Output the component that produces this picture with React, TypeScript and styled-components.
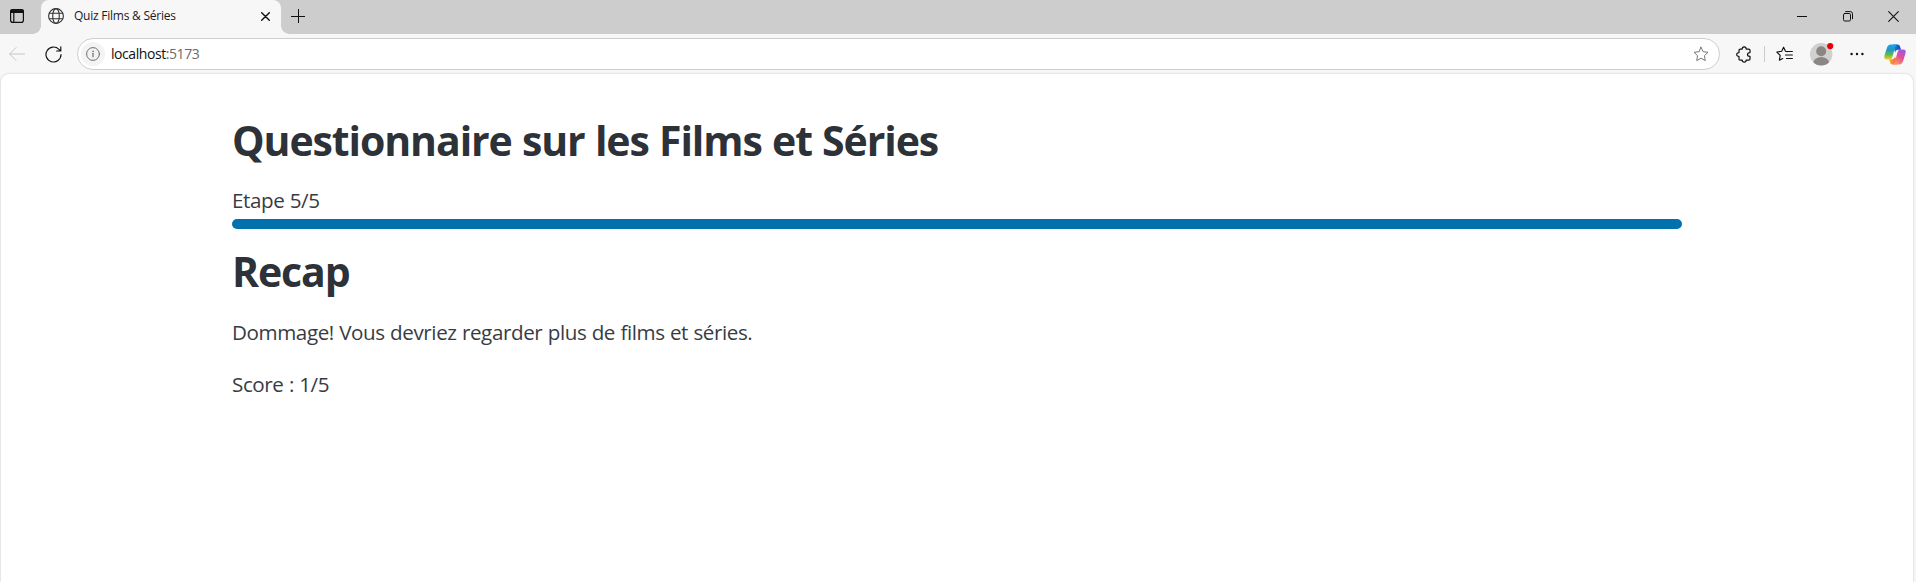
import React from "react";
import styled, { createGlobalStyle } from "styled-components";

const GlobalStyle = createGlobalStyle`
  * { box-sizing: border-box; }
  html, body { margin: 0; height: 100%; overflow: hidden; }
  body { background: #f7f7f7; font-family: "Segoe UI", "Open Sans", "Noto Sans", sans-serif; }
`;

const Window = styled.div`
  display: flex;
  flex-direction: column;
  width: 100%;
  height: 582px;
  background: #f7f7f7;
`;

const TabStrip = styled.div`
  display: flex;
  height: 34px;
  background: #cdcdcd;
`;

const StripIcon = styled.div<{ $width: number }>`
  display: flex;
  align-items: center;
  justify-content: center;
  width: ${(p) => p.$width}px;
  height: 32px;
`;

const Tab = styled.div`
  position: relative;
  display: flex;
  align-items: center;
  width: 240px;
  height: 34px;
  padding: 0 11px 2px 7px;
  background: #f7f7f7;
  border-radius: 8px 8px 0 0;
  &::before, &::after {
    content: "";
    position: absolute;
    bottom: 0;
    width: 8px;
    height: 8px;
  }
  &::before {
    left: -8px;
    background: radial-gradient(circle at 0 0, transparent 7.5px, #f7f7f7 8px);
  }
  &::after {
    right: -8px;
    background: radial-gradient(circle at 100% 0, transparent 7.5px, #f7f7f7 8px);
  }
`;

const TabTitle = styled.span`
  flex: 1;
  margin-left: 10px;
  font-size: 12px;
  line-height: 16px;
  letter-spacing: -0.24px;
  color: #1b1b1b;
  white-space: nowrap;
`;

const WindowButtons = styled.div`
  display: flex;
  margin-left: auto;
`;

const Toolbar = styled.div`
  display: flex;
  align-items: center;
  height: 40px;
`;

const ToolIcon = styled.div<{ $width: number }>`
  display: flex;
  flex: none;
  align-items: center;
  justify-content: center;
  width: ${(p) => p.$width}px;
  height: 40px;
`;

const AddressBar = styled.div`
  display: flex;
  align-items: center;
  width: 1643px;
  height: 32px;
  margin-left: 5px;
  padding: 0 10px 0 3px;
  background: #fff;
  border: 1px solid #cecece;
  border-radius: 16px;
`;

const InfoBadge = styled.div`
  display: flex;
  align-items: center;
  justify-content: center;
  width: 24px;
  height: 24px;
  border-radius: 50%;
  background: #f3f3f3;
`;

const Url = styled.div`
  flex: 1;
  margin-left: 6px;
  font-size: 14px;
  line-height: 20px;
  letter-spacing: -0.43px;
  color: #111;
  span { color: #6b6b6b; }
`;

const Divider = styled.div`
  width: 1px;
  height: 16px;
  background: #cbcbcb;
`;

const Page = styled.div`
  flex: 1;
  margin: 0 3px 0 1px;
  background: #fff;
  border-radius: 8px 8px 0 0;
  box-shadow: 0 0 2px rgba(0, 0, 0, 0.24);
`;

const Container = styled.main`
  width: 1450px;
  margin-left: 231px;
  padding-top: 43px;
  color: #373c44;
`;

const Heading = styled.h1<{ $gap: number }>`
  margin: 0 0 ${(p) => p.$gap}px;
  font-size: 41px;
  line-height: 47px;
  font-weight: 700;
  letter-spacing: -1.09px;
  word-spacing: 0.7px;
  color: #2d3138;
  white-space: nowrap;
`;

const Text = styled.p<{ $gap: number }>`
  margin: 0 0 ${(p) => p.$gap}px;
  font-size: 20.6px;
  line-height: 32px;
  letter-spacing: -0.4px;
  word-spacing: 0.4px;
  white-space: nowrap;
`;

const Progress = styled.div`
  height: 10px;
  margin-bottom: 19px;
  border-radius: 5px;
  background: #0172ad;
`;

const line = { fill: "none", stroke: "#111", strokeLinecap: "round", strokeLinejoin: "round" } as const;
const starPath = "M8 1.2l2.1 4.5 4.9.6-3.6 3.4.9 4.9L8 12.2l-4.3 2.4.9-4.9L1 6.3l4.9-.6z";

const TabsIcon = () => (
  <svg width="14" height="14" viewBox="0 0 14 14" {...line} strokeWidth="1.2">
    <rect x=".6" y=".6" width="12.8" height="12.8" rx="2.2" />
    <path d="M1 1.2h12v2.2H1z" fill="#111" />
    <path d="M3.8 4v9" />
  </svg>
);
const Globe = () => (
  <svg width="16" height="16" viewBox="0 0 16 16" {...line} stroke="#333" strokeWidth="1.1">
    <circle cx="8" cy="8" r="7.4" />
    <ellipse cx="8" cy="8" rx="3.3" ry="7.4" />
    <path d="M1.3 5.3h13.4M1.3 10.7h13.4" />
  </svg>
);
const Cross = ({ size, weight }: { size: number; weight: number }) => (
  <svg width={size} height={size} viewBox={`0 0 ${size} ${size}`} {...line} strokeWidth={weight}>
    <path d={`M.7 .7L${size - 0.7} ${size - 0.7}M${size - 0.7} .7L.7 ${size - 0.7}`} />
  </svg>
);
const Plus = () => (
  <svg width="14" height="14" viewBox="0 0 14 14" {...line} strokeLinecap="butt">
    <path d="M7.5 0v14M0 7.5h14" />
  </svg>
);
const Minimize = () => (
  <svg width="10" height="10" viewBox="0 0 10 10" {...line} strokeLinecap="butt"><path d="M0 5.5h10" /></svg>
);
const Restore = () => (
  <svg width="10" height="11" viewBox="0 0 10 11" {...line}>
    <rect x=".5" y="2.5" width="7" height="7.5" rx="1.3" />
    <path d="M2.6 .6h4.7a2.2 2.2 0 0 1 2.2 2.2v5" />
  </svg>
);
const Back = () => (
  <svg width="16" height="14" viewBox="0 0 16 14" {...line} stroke="#c6c6c6"><path d="M15.5 7H.7M7 .6L.6 7 7 13.4" /></svg>
);
const Reload = () => (
  <svg width="17" height="17" viewBox="0 0 17 17" {...line} strokeWidth="1.15">
    <path d="M16 8.5A7.5 7.5 0 1 1 13.9 3.3L15.6 5M15.8 .8V5H11.6" />
  </svg>
);
const Info = () => (
  <svg width="14" height="14" viewBox="0 0 14 14" {...line} stroke="#6e6e6e">
    <circle cx="7" cy="7" r="6.4" /><path d="M7 6.3v3.4" strokeWidth="1.2" /><circle cx="7" cy="4.3" r=".3" />
  </svg>
);
const Star = () => (
  <svg width="16" height="16" viewBox="0 0 16 16" {...line} stroke="#777"><path d={starPath} /></svg>
);
const Puzzle = () => (
  <svg width="15" height="17" viewBox="0 0 15 17" {...line} strokeWidth="1.2">
    <path d="M4.2 3.1h2C6.2 1.6 7 .8 8.2.8s2 .8 2 2.3h2.6q1.2 0 1.2 1.2v2.3c-1.7 0-2.5.7-2.5 1.9s.8 1.9 2.5 1.9v2.5q0 1.2-1.2 1.2h-2.6c0 1.4-.8 2.1-2 2.1s-2-.7-2-2.1h-2Q3 14.1 3 12.9v-2.5C1.5 10.4.7 9.7.7 8.5S1.5 6.6 3 6.6V4.3q0-1.2 1.2-1.2z" />
  </svg>
);
const Favorites = () => (
  <svg width="17" height="16" viewBox="0 0 17 16" {...line} strokeWidth="1.15">
    <path d="M11.5 5.7L9.5 5.3 7.6 1.2 5.7 5.3.8 6l3.4 3.4-.8 4.8 3.3-1.7M10.5 5.5h5.9M9.5 9h6.9M10.5 12.5h5.9" />
  </svg>
);
const Avatar = () => (
  <svg width="24" height="24" viewBox="0 0 24 24">
    <defs><clipPath id="face"><circle cx="11.2" cy="12.3" r="11.2" /></clipPath></defs>
    <circle cx="11.2" cy="12.3" r="11.2" fill="#d2d0ce" />
    <g clipPath="url(#face)" fill="#8a8683"><circle cx="11.2" cy="9.3" r="5" /><ellipse cx="11.2" cy="20.7" rx="7.8" ry="5.6" /></g>
    <circle cx="20.2" cy="4.1" r="3.1" fill="#e3000b" />
  </svg>
);
const More = () => (
  <svg width="14" height="4" viewBox="0 0 14 4" fill="#111"><circle cx="1.6" cy="2" r="1.2" /><circle cx="7" cy="2" r="1.2" /><circle cx="12.4" cy="2" r="1.2" /></svg>
);
const Copilot = () => (
  <svg width="22" height="21" viewBox="0 0 22 21">
    <defs>
      <linearGradient id="cool" x1="0" y1="0" x2="0" y2="1">
        <stop offset="0" stopColor="#18a5e8" /><stop offset=".38" stopColor="#2896bd" /><stop offset=".68" stopColor="#5dbb55" /><stop offset="1" stopColor="#f6cb17" />
      </linearGradient>
      <linearGradient id="warm" x1=".8" y1="0" x2=".25" y2="1">
        <stop offset="0" stopColor="#9a55ee" /><stop offset=".48" stopColor="#e44e97" /><stop offset="1" stopColor="#ff9b55" />
      </linearGradient>
      <linearGradient id="blue"><stop offset="0" stopColor="#168ee0" /><stop offset="1" stopColor="#183fc3" /></linearGradient>
      <linearGradient id="orange"><stop offset="0" stopColor="#f5ba27" /><stop offset="1" stopColor="#f05252" /></linearGradient>
    </defs>
    <path d="M9 .4h4.6c1.7 0 2.1 1.1 2.6 2.7l.8 2.6h-2.8c-1.7 0-2.4.9-3 2.7L9 2.8z" fill="url(#blue)" />
    <path d="M13 20.4H8.4c-1.7 0-2.1-1.1-2.6-2.7L5 15.3h3c1.7 0 2.4-.9 3-2.7l2 5.3z" fill="url(#orange)" />
    <path d="M12.3.4H6.8C4.7.4 3.5 2 2.7 4.4L.8 10.6c-.9 3-.6 4.8 2 4.8h2.7c1.7 0 2.4-1 2.9-2.7l2.4-8.2C11.4 2.2 12 .8 13.3.5z" fill="url(#cool)" />
    <path d="M9.7 20.4h5.5c2.1 0 3.3-1.6 4.1-4l1.9-6.2c.9-3 .6-4.8-2-4.8h-2.7c-1.7 0-2.4 1-2.9 2.7l-2.4 8.2c-.6 2.3-1.2 3.7-2.5 4z" fill="url(#warm)" />
  </svg>
);

export default function App() {
  return (
    <Window>
      <GlobalStyle />
      <TabStrip>
        <StripIcon $width={34}><TabsIcon /></StripIcon>
        <StripIcon $width={7} />
        <Tab>
          <Globe />
          <TabTitle>Quiz Films &amp; Séries</TabTitle>
          <Cross size={9} weight={1.4} />
        </Tab>
        <StripIcon $width={34}><Plus /></StripIcon>
        <WindowButtons>
          <StripIcon $width={46}><Minimize /></StripIcon>
          <StripIcon $width={46}><Restore /></StripIcon>
          <StripIcon $width={45}><Cross size={11} weight={1.1} /></StripIcon>
        </WindowButtons>
      </TabStrip>
      <Toolbar>
        <ToolIcon $width={34}><Back /></ToolIcon>
        <ToolIcon $width={38}><Reload /></ToolIcon>
        <AddressBar>
          <InfoBadge><Info /></InfoBadge>
          <Url>localhost<span>:5173</span></Url>
          <Star />
        </AddressBar>
        <ToolIcon $width={3} />
        <ToolIcon $width={41}><Puzzle /></ToolIcon>
        <Divider />
        <ToolIcon $width={39}><Favorites /></ToolIcon>
        <ToolIcon $width={35}><Avatar /></ToolIcon>
        <ToolIcon $width={36}><More /></ToolIcon>
        <ToolIcon $width={39}><Copilot /></ToolIcon>
      </Toolbar>
      <Page>
        <Container>
          <Heading $gap={20}>Questionnaire sur les Films et Séries</Heading>
          <Text $gap={3}>Etape 5/5</Text>
          <Progress />
          <Heading as="h2" $gap={21}>Recap</Heading>
          <Text $gap={20}>Dommage! Vous devriez regarder plus de films et séries.</Text>
          <Text $gap={20}>Score : 1/5</Text>
        </Container>
      </Page>
    </Window>
  );
}
